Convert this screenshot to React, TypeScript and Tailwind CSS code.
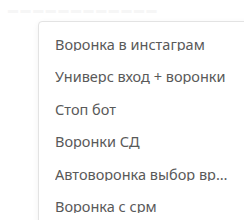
import React from "react";

const items = [
  "Воронка в инстаграм",
  "Универс вход + воронки",
  "Стоп бот",
  "Воронки СД",
  "Автоворонка выбор времени",
  "Воронка с срм",
];

export default function App() {
  return (
    <div className="relative w-[244px] h-[220px] overflow-hidden bg-white" style={{ fontFamily: '"Noto Sans", "Open Sans", sans-serif' }}>
      <div className="flex flex-col gap-[18px] pt-[2px] pl-[8px] text-[10px] text-[#f6f6f6] select-none">
        <div>▬ ▬ ▬ ▬ ▬ ▬ ▬ ▬ ▬ ▬ ▬ ▬</div>
      </div>
      <div className="absolute left-[38px] top-[21px] w-[240px] h-[220px] rounded-[4px] border border-[#e3e3e3] bg-white shadow-[0_2px_6px_rgba(0,0,0,0.06)]">
        <ul className="flex flex-col pt-[6px]">
          {items.map((t) => (
            <li key={t} className="h-[32.4px] flex items-center pl-[16px] text-[14.5px] text-[#595959] leading-none">
              <span className="block w-[178px] truncate">{t}</span>
            </li>
          ))}
        </ul>
      </div>
    </div>
  );
}
